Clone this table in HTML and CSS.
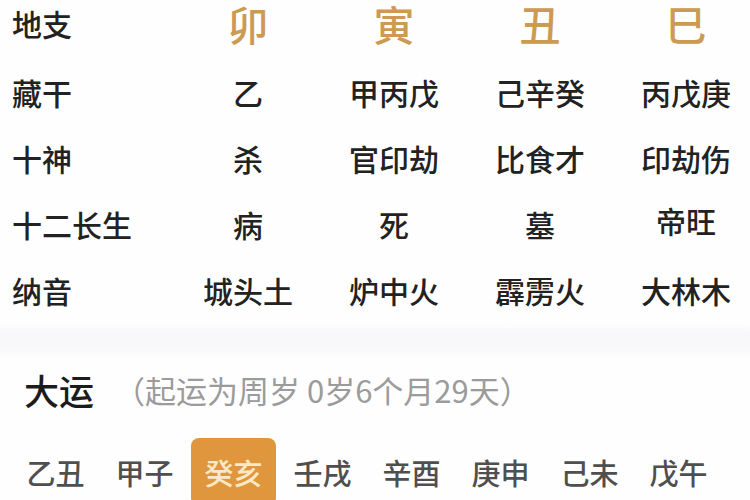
FILE: index.html
```html
<!DOCTYPE html>
<html lang="zh-CN">
<head>
<meta charset="utf-8">
<link rel="stylesheet" href="styles.css">
</head>
<body>
<div class="page">
  <div class="chart">
    <div class="row row-branch">
      <div class="label">地支</div>
      <div class="cell gold">卯</div>
      <div class="cell gold">寅</div>
      <div class="cell gold">丑</div>
      <div class="cell gold">巳</div>
    </div>
    <div class="row">
      <div class="label">藏干</div>
      <div class="cell">乙</div>
      <div class="cell">甲丙戊</div>
      <div class="cell">己辛癸</div>
      <div class="cell">丙戊庚</div>
    </div>
    <div class="row">
      <div class="label">十神</div>
      <div class="cell">杀</div>
      <div class="cell">官印劫</div>
      <div class="cell">比食才</div>
      <div class="cell">印劫伤</div>
    </div>
    <div class="row">
      <div class="label">十二长生</div>
      <div class="cell">病</div>
      <div class="cell">死</div>
      <div class="cell">墓</div>
      <div class="cell up">帝旺</div>
    </div>
    <div class="row">
      <div class="label">纳音</div>
      <div class="cell">城头土</div>
      <div class="cell">炉中火</div>
      <div class="cell">霹雳火</div>
      <div class="cell">大林木</div>
    </div>
  </div>
  <div class="band"></div>
  <div class="dayun">
    <div class="dayun-head">
      <span class="dayun-title">大运</span>
      <span class="dayun-note">（起运为周岁 0岁6个月29天）</span>
    </div>
    <div class="dayun-list">
      <div class="yun">乙丑</div>
      <div class="yun">甲子</div>
      <div class="yun active">癸亥</div>
      <div class="yun">壬戌</div>
      <div class="yun">辛酉</div>
      <div class="yun">庚申</div>
      <div class="yun">己未</div>
      <div class="yun">戊午</div>
    </div>
  </div>
</div>
</body>
</html>
```
FILE: styles.css
```css
html, body {
  margin: 0;
  padding: 0;
  background: #fefefe;
  overflow: hidden;
}
.page {
  width: 750px;
  height: 500px;
  overflow: hidden;
  font-family: "Noto Sans CJK SC", "Noto Sans", sans-serif;
  font-weight: 500;
  color: #222;
}
.chart {
  display: flex;
  flex-direction: column;
}
.row {
  display: grid;
  grid-template-columns: 175px 146px 146px 146px 146px;
  height: 66px;
  align-items: center;
  font-size: 30px;
  line-height: 1;
}
.row-branch {
  height: 46px;
  margin-bottom: 13px;
}
.label {
  padding-left: 12px;
  white-space: nowrap;
}
.cell {
  text-align: center;
  white-space: nowrap;
}
.cell.up {
  margin-bottom: 8px;
}
.gold {
  color: #cc9a52;
  font-size: 41px;
}
.band {
  height: 35px;
  background: linear-gradient(#fefefe, #f8f8fa 30%, #f8f8fa 70%, #fefefe);
}
.dayun-head {
  height: 62px;
  display: flex;
  align-items: center;
  padding-left: 24px;
  line-height: 1;
}
.dayun-title {
  font-size: 35px;
  color: #1c1c1c;
}
.dayun-note {
  font-size: 31px;
  font-weight: 400;
  color: #9b9b9b;
  margin-left: 20px;
}
.dayun-list {
  margin-top: 18px;
  display: flex;
  gap: 4px;
  padding-left: 13px;
}
.yun {
  width: 85px;
  height: 68px;
  display: flex;
  align-items: center;
  justify-content: center;
  font-size: 29px;
  color: #4f4f4f;
  line-height: 1;
}
.yun.active {
  background: #e0963c;
  color: #fbe8c6;
  border-radius: 8px;
}
```
